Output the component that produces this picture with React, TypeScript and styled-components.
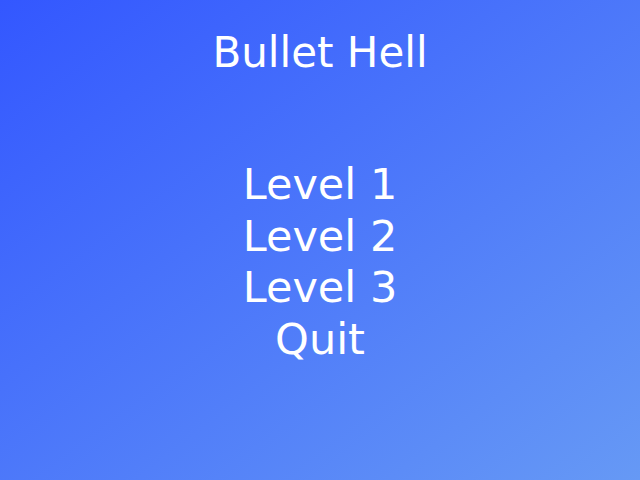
import React from "react";
import styled, { createGlobalStyle } from "styled-components";

const Global = createGlobalStyle`
  html, body { margin: 0; padding: 0; }
  body { width: 640px; height: 480px; overflow: hidden; }
`;

const Screen = styled.div`
  width: 640px;
  height: 480px;
  box-sizing: border-box;
  background: linear-gradient(to bottom right, #3357ff, #6699f5);
  font-family: "DejaVu Sans", sans-serif;
  color: #ffffff;
  display: flex;
  flex-direction: column;
  align-items: center;
  padding-top: 32px;
`;

const Title = styled.h1`
  margin: 0;
  font-size: 42px;
  font-weight: normal;
  line-height: 42px;
`;

const Menu = styled.div`
  margin-top: 85px;
  display: flex;
  flex-direction: column;
  align-items: center;
`;

const Item = styled.div`
  font-size: 43px;
  line-height: 51.5px;
  cursor: pointer;
`;

export default function App() {
  return (
    <>
      <Global />
      <Screen>
        <Title>Bullet Hell</Title>
        <Menu>
          <Item>Level 1</Item>
          <Item>Level 2</Item>
          <Item>Level 3</Item>
          <Item>Quit</Item>
        </Menu>
      </Screen>
    </>
  );
}
